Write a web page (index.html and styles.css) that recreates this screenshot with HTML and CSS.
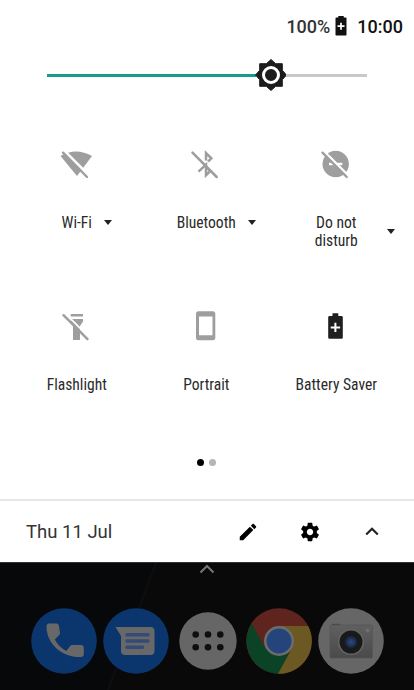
FILE: index.html
```
<!DOCTYPE html>
<html lang="en">
<head>
  <meta charset="UTF-8">
  <title>Quick Settings</title>
  <link rel="stylesheet" href="styles.css">
</head>
<body>

<div class="panel">
  <div class="status">
    <span class="percent">100%</span>
    <svg class="status-battery" width="12" height="20" viewBox="0 0 12 20">
      <path fill="#111" d="M3.3 0h5.4v1.5h2.1q.7 0 .7.7v16.6q0 .7-.7.7H1.2q-.7 0-.7-.7V2.200q0-.7.7-.7h2.1z"/>
      <path stroke="#fff" stroke-width="1.7" d="M6 6.7v7M2.5 10.2h7"/>
    </svg>
    <span class="clock">10:00</span>
  </div>

  <div class="brightness">
    <div class="track-on"></div>
    <svg class="thumb" width="34" height="34" viewBox="0 0 34 34">
      <path fill="#1c1c1c" stroke="#1c1c1c" stroke-width="1" stroke-linejoin="round" d="M17 1.5l4.700 4.200H28.300V12.300L32.500 17l-4.200 4.700v6.600h-6.600L17 32.500l-4.700-4.200H5.700v-6.600L1.500 17l4.200-4.700V5.700h6.600z"/>
      <circle cx="17" cy="17" r="7.500" fill="none" stroke="#fff" stroke-width="3"/>
    </svg>
    <div class="track-off"></div>
  </div>

  <div class="tiles">
    <div class="tile">
      <svg class="icon" viewBox="0 0 36 32">
        <path fill="#9e9e9e" d="M1.500 8Q17-1 33 8L18 28z"/>
        <path stroke="#fff" stroke-width="2.600" d="M3.500 1l27 27"/>
        <path stroke="#9e9e9e" stroke-width="2.400" stroke-linecap="round" d="M4 4.700l24 24.300"/>
      </svg>
      <div class="label"><span>Wi-Fi</span><i class="caret"></i></div>
    </div>
    <div class="tile">
      <svg class="icon" viewBox="0 0 36 32">
        <g fill="none" stroke="#9e9e9e" stroke-width="2.500">
          <path d="M18 12.500V5l5.300 5.300-3.200 3.200M10.500 23.700l7.500-7v10.600l4.300-4.300-4.300-4.300"/>
          <path stroke-linecap="round" d="M4.500 4.700L28.700 29"/>
        </g>
      </svg>
      <div class="label"><span>Bluetooth</span><i class="caret"></i></div>
    </div>
    <div class="tile">
      <svg class="icon" viewBox="0 0 36 32">
        <circle cx="17.700" cy="16" r="13.200" fill="#9e9e9e"/>
        <path stroke="#fff" stroke-width="2.400" d="M11 16h13.300"/>
        <path stroke="#fff" stroke-width="2.600" d="M5 2.300l25 25"/>
        <path stroke="#9e9e9e" stroke-width="2.400" stroke-linecap="round" d="M4.500 4.700L28.700 29"/>
      </svg>
      <div class="label"><span>Do not<br>disturb</span><i class="caret caret-far"></i></div>
    </div>
    <div class="tile">
      <svg class="icon" viewBox="0 0 36 32">
        <path fill="#9e9e9e" d="M11.700 4H24v2.500H11.700zM12 9h12v2.500l-3 4.500v14h-7V16l-2-3z"/>
        <path stroke="#fff" stroke-width="1.800" d="M5.500 2.700l24 24"/>
        <path stroke="#9e9e9e" stroke-width="2.400" stroke-linecap="round" d="M4.500 5.200l24 24"/>
      </svg>
      <div class="label"><span>Flashlight</span></div>
    </div>
    <div class="tile">
      <svg class="icon" viewBox="0 0 36 32">
        <path fill="#9e9e9e" fill-rule="evenodd" d="M10.500 1.300h14.300q2.500 0 2.500 2.500v24q0 2.500-2.500 2.500H10.500q-2.500 0-2.500-2.500v-24q0-2.500 2.500-2.500zM11 6.500v18.800h13.500V6.500z"/>
      </svg>
      <div class="label"><span>Portrait</span></div>
    </div>
    <div class="tile">
      <svg class="icon" viewBox="0 0 36 32">
        <path fill="#1f1f1f" d="M14.500 3.200h5.800v2.800h3.200q1.300 0 1.300 1.300v20.200q0 1.300-1.300 1.300H11.500q-1.300 0-1.300-1.300V7.300q0-1.300 1.300-1.300h3z"/>
        <path stroke="#fff" stroke-width="2" d="M17.400 12.700v9.400M12.700 17.400h9.400"/>
      </svg>
      <div class="label"><span>Battery Saver</span></div>
    </div>
  </div>

  <div class="pages">
    <span class="dot active"></span>
    <span class="dot"></span>
  </div>

  <div class="footer">
    <span class="date">Thu 11 Jul</span>
    <svg width="22" height="22" viewBox="0 0 24 24">
      <path d="M3 17.250V21h3.750L17.810 9.940l-3.750-3.750L3 17.250zM20.710 7.040c.39-.39.39-1.020 0-1.410l-2.340-2.340c-.39-.39-1.020-.39-1.410 0l-1.830 1.830 3.750 3.750 1.830-1.830z"/>
    </svg>
    <svg width="22" height="22" viewBox="0 0 24 24">
      <path d="M19.430 12.980c.04-.32.07-.64.07-.98s-.03-.66-.07-.98l2.110-1.650c.19-.15.240-.42.120-.64l-2-3.460c-.12-.22-.39-.3-.61-.22l-2.490 1c-.52-.4-1.080-.73-1.690-.98l-.38-2.650C14.460 2.180 14.250 2 14 2h-4c-.25 0-.46.180-.49.420l-.38 2.650c-.61.250-1.170.59-1.690.98l-2.490-1c-.23-.09-.49 0-.61.220l-2 3.460c-.13.220-.07.490.12.640l2.110 1.650c-.04.320-.07.650-.07.980s.03.660.07.980l-2.110 1.650c-.19.150-.24.420-.12.640l2 3.460c.12.220.39.300.61.220l2.490-1c.52.400 1.080.730 1.690.980l.38 2.650c.03.240.24.420.49.420h4c.25 0 .46-.18.49-.42l.38-2.650c.61-.25 1.170-.59 1.690-.98l2.490 1c.23.090.49 0 .61-.22l2-3.460c.12-.22.070-.49-.12-.64l-2.110-1.650zM12 15.500c-1.930 0-3.500-1.570-3.500-3.500s1.570-3.500 3.500-3.500 3.500 1.570 3.500 3.500-1.570 3.500-3.500 3.500z"/>
    </svg>
    <svg width="22" height="22" viewBox="0 0 22 22">
      <path fill="none" stroke="#222" stroke-width="2.200" d="M5.200 13.500L11 7.700l5.800 5.800"/>
    </svg>
  </div>
</div>

<div class="home">
  <svg class="handle" width="16" height="10" viewBox="0 0 16 10">
    <path fill="none" stroke="#777" stroke-width="2" d="M1.500 8.500L8 2l6.500 6.500"/>
  </svg>
  <div class="dock">
    <svg width="66" height="66" viewBox="0 0 66 66">
      <circle cx="33" cy="33" r="32.800" fill="#0a366d"/>
      <path fill="#686868" d="M18 15.500h7.500q2 0 2.300 2l1.200 7q.2 1.500-.8 2.500l-4.400 4.500q4 7.500 11.500 11.500l3.500-4.500q1-1.400 3-1.400h8q3 0 3 3v6q0 3-3 3C31 49.500 15.500 36 15.500 18.500q0-3 2.500-3z"/>
    </svg>
    <svg width="66" height="66" viewBox="0 0 66 66">
      <circle cx="33" cy="33" r="32.800" fill="#0a366d"/>
      <path fill="#686868" d="M12.500 19h35q4 0 4 4v20q0 4-4 4H22q-4 0-4-4V28z"/>
      <path stroke="#354a74" stroke-width="3.500" stroke-linecap="round" d="M24 26.700h21M24 33h21M24 39.200h15.500"/>
    </svg>
    <svg class="apps" width="58" height="58" viewBox="0 0 58 58">
      <circle cx="29" cy="29" r="28.700" fill="#666"/>
      <g fill="#0e0e0e">
        <circle cx="16.700" cy="22.500" r="3.300"/><circle cx="29" cy="22.500" r="3.300"/><circle cx="41.300" cy="22.500" r="3.300"/>
        <circle cx="16.700" cy="35.300" r="3.300"/><circle cx="29" cy="35.300" r="3.300"/><circle cx="41.300" cy="35.300" r="3.300"/>
      </g>
    </svg>
    <svg width="66" height="66" viewBox="0 0 66 66">
      <circle cx="33" cy="33" r="32.800" fill="#60241f"/>
      <path fill="#0a4325" d="M5.700 15.500A32.800 32.800 0 0 0 32 65.800l13-21.800-12 4-14-8z"/>
      <path fill="#6b5822" d="M33 18h29.200A32.800 32.800 0 0 1 32 65.800l13.500-24.800z"/>
      <circle cx="33" cy="33" r="15" fill="#6c6c6c"/>
      <circle cx="33" cy="33" r="12.500" fill="#25447b"/>
    </svg>
    <svg width="66" height="66" viewBox="0 0 66 66">
      <defs>
        <linearGradient id="body" x1="0" y1="0" x2="0" y2="1">
          <stop offset="0" stop-color="#606060"/>
          <stop offset="1" stop-color="#4a4a4a"/>
        </linearGradient>
        <radialGradient id="lens">
          <stop offset="0" stop-color="#2d4a7c"/>
          <stop offset=".6" stop-color="#213258"/>
          <stop offset="1" stop-color="#161b2c"/>
        </radialGradient>
      </defs>
      <circle cx="33" cy="33" r="32.800" fill="#666"/>
      <path fill="#454545" d="M14 15.800h8v2h-8z"/>
      <rect x="12" y="17" width="42.500" height="33" rx="1.500" fill="url(#body)" stroke="#555" stroke-width=".7"/>
      <circle cx="49.500" cy="22.500" r="2" fill="#6e6e6e"/>
      <circle cx="33" cy="34" r="13" fill="#656565"/>
      <circle cx="33" cy="34" r="11.500" fill="#191919"/>
      <circle cx="33" cy="34" r="6.500" fill="url(#lens)"/>
    </svg>
  </div>
</div>

</body>
</html>
```

FILE: styles.css
```
* {
  box-sizing: border-box;
}

body {
  margin: 0;
  height: 690px;
  font-family: Roboto, "Liberation Sans", sans-serif;
  background: #08090a;
  overflow: hidden;
}

svg {
  display: block;
  flex-shrink: 0;
}

.panel {
  height: 562px;
  background: #fff;
}

.status {
  display: flex;
  align-items: center;
  justify-content: flex-end;
  height: 52px;
  padding-right: 11px;
  font-size: 18px;
  font-weight: 500;
}

.percent {
  color: #333;
}

.status-battery {
  margin: 0 10px 1px 5px;
}

.clock {
  color: #111;
}

.brightness {
  display: flex;
  align-items: center;
  height: 46px;
  padding: 0 47px 0 46.5px;
}

.track-on {
  width: 209px;
  height: 3px;
  background: #169b8c;
}

.thumb {
  margin: 0 -2px;
}

.track-off {
  flex: 1;
  height: 3px;
  background: #c8c8c8;
}

.tiles {
  display: grid;
  grid-template-columns: repeat(3, 129.5px);
  grid-auto-rows: 162px;
  padding: 32px 0 0 12px;
}

.tile {
  display: flex;
  flex-direction: column;
  align-items: center;
  padding-top: 18px;
}

.icon {
  width: 36px;
  height: 32px;
}

.label {
  position: relative;
  margin-top: 34px;
  font-size: 15.6px;
  font-stretch: 75%;
  line-height: 18px;
  text-align: center;
  color: #2a2a2a;
}

.tile:nth-child(3n) .label {
  padding-left: 1px;
}

.caret {
  position: absolute;
  top: 50%;
  left: calc(100% + 12.5px);
  margin-top: -3px;
  border: 4.5px solid transparent;
  border-top: 5px solid #222;
  border-bottom: 0;
}

.caret-far {
  left: calc(100% + 29px);
}

.pages {
  display: flex;
  justify-content: center;
  gap: 5px;
  padding: 5px 0.5px 0 0;
}

.dot {
  width: 7px;
  height: 7px;
  border-radius: 50%;
  background: #b5b5b5;
}

.dot.active {
  background: #000;
}

.footer {
  display: flex;
  align-items: center;
  gap: 40px;
  height: 64px;
  margin-top: 33px;
  padding: 0 31px 0 26px;
  border-top: 2px solid #e6e6e6;
}

.date {
  flex: 1;
  font-size: 18.5px;
  color: #333;
}

.home {
  display: flex;
  flex-direction: column;
  align-items: center;
  height: 128px;
  background: linear-gradient(110.7deg, #07080a 33.4%, #0e0f10 33.7%, #090909 34.2%);
  border-top: 1px solid #333;
}

.handle {
  margin-top: 1px;
}

.dock {
  display: flex;
  align-items: center;
  gap: 5.6px;
  margin: 33.6px 0 0 1px;
}

.apps {
  margin: 0 4px;
}
```
